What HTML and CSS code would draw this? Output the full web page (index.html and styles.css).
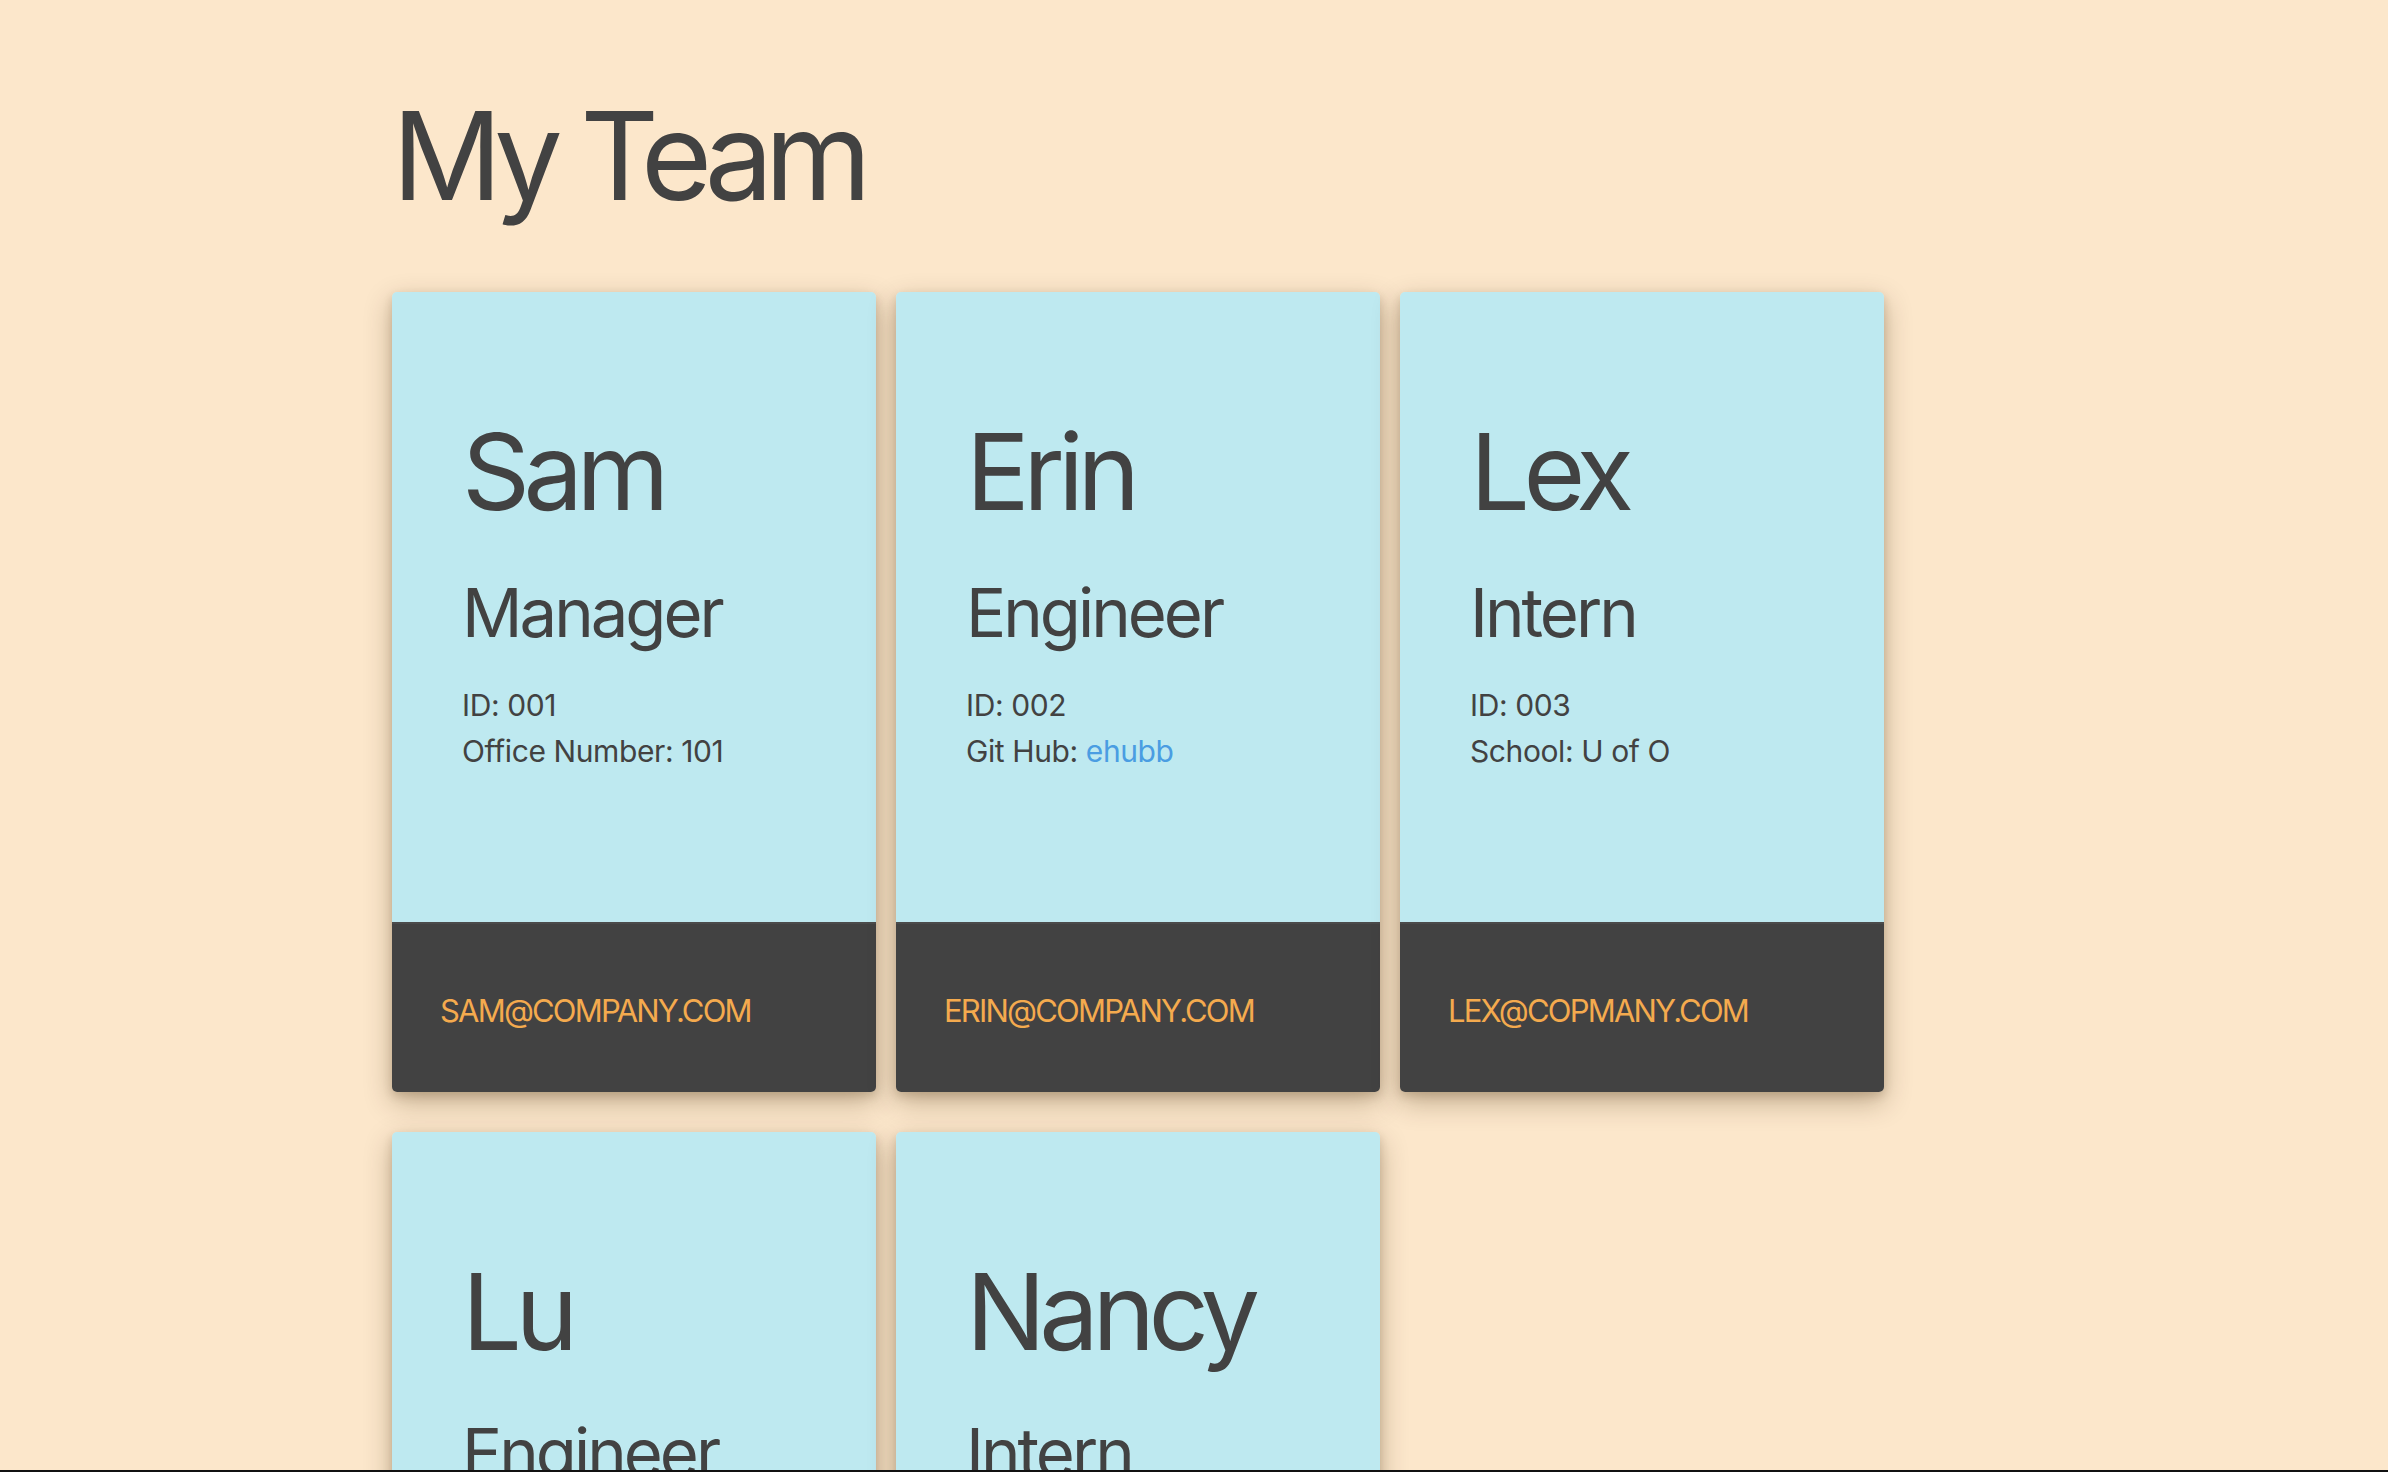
FILE: index.html
```html
<!DOCTYPE html>
<html lang="en">
<head>
<meta charset="utf-8">
<title>My Team</title>
<link rel="stylesheet" href="styles.css">
</head>
<body>
<main class="container">
  <h1 class="title">My Team</h1>
  <section class="cards">
    <article class="card">
      <div class="card-body">
        <h2 class="name">Sam</h2>
        <h3 class="role">Manager</h3>
        <p class="info">ID: 001</p>
        <p class="info">Office Number: 101</p>
      </div>
      <div class="card-footer">sam@company.com</div>
    </article>
    <article class="card">
      <div class="card-body">
        <h2 class="name">Erin</h2>
        <h3 class="role">Engineer</h3>
        <p class="info">ID: 002</p>
        <p class="info">Git Hub: <a class="link" href="#">ehubb</a></p>
      </div>
      <div class="card-footer">erin@company.com</div>
    </article>
    <article class="card">
      <div class="card-body">
        <h2 class="name">Lex</h2>
        <h3 class="role">Intern</h3>
        <p class="info">ID: 003</p>
        <p class="info">School: U of O</p>
      </div>
      <div class="card-footer">lex@copmany.com</div>
    </article>
    <article class="card">
      <div class="card-body">
        <h2 class="name">Lu</h2>
        <h3 class="role">Engineer</h3>
        <p class="info">ID: 004</p>
        <p class="info">Git Hub: <a class="link" href="#">lu</a></p>
      </div>
      <div class="card-footer">lu@company.com</div>
    </article>
    <article class="card">
      <div class="card-body">
        <h2 class="name">Nancy</h2>
        <h3 class="role">Intern</h3>
        <p class="info">ID: 005</p>
        <p class="info">School: U of O</p>
      </div>
      <div class="card-footer">nancy@company.com</div>
    </article>
  </section>
</main>
<div class="screen-edge"></div>
</body>
</html>
```
FILE: styles.css
```css
html, body {
  margin: 0;
  padding: 0;
}
body {
  background: #fce7cb;
  color: #424242;
  font-family: Inter, "Noto Sans", "Liberation Sans", sans-serif;
}
.container {
  width: 1604px;
  margin: 0 auto;
}
.title {
  margin: 83px 0 63px;
  font-size: 122px;
  line-height: 146px;
  font-weight: 400;
  letter-spacing: -8.5px;
}
.cards {
  display: flex;
  flex-wrap: wrap;
  column-gap: 20px;
  row-gap: 40px;
}
.card {
  width: 484px;
  height: 800px;
  display: flex;
  flex-direction: column;
  border-radius: 5px;
  box-shadow: 0 10px 28px rgba(60, 35, 0, 0.3), 0 4px 10px rgba(60, 35, 0, 0.16);
  overflow: hidden;
}
.card-body {
  flex: 1;
  background: #bee9f0;
  padding: 116px 40px 0 70px;
}
.name {
  margin: 0;
  font-size: 106px;
  line-height: 127px;
  font-weight: 400;
  letter-spacing: -6.5px;
}
.role {
  margin: 38px 0 29px;
  font-size: 67px;
  line-height: 80px;
  font-weight: 400;
  letter-spacing: -3px;
}
.info {
  margin: 0;
  font-size: 30px;
  line-height: 46px;
  letter-spacing: -0.4px;
}
.link {
  color: #4a9de2;
  text-decoration: none;
}
.card-footer {
  height: 170px;
  box-sizing: border-box;
  background: #424242;
  border-top: 2px solid #4b4b4b;
  padding: 5px 30px 0 48px;
  font-size: 31px;
  line-height: 164px;
  color: #f4aa4e;
  text-transform: uppercase;
  letter-spacing: -1.8px;
}
.screen-edge {
  position: fixed;
  left: 0;
  right: 0;
  bottom: 0;
  height: 2px;
  background: #111;
}
```
